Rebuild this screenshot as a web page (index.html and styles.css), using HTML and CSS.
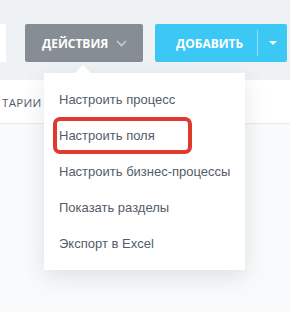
FILE: index.html
```html
<!DOCTYPE html>
<html>
<head>
<meta charset="utf-8">
<link rel="stylesheet" href="styles.css">
</head>
<body>
<div class="top">
  <div class="toolbar">
    <div class="search"></div>
    <div class="btn btn-gray">
      <span>Действия</span>
      <svg class="chev" width="11" height="7" viewBox="0 0 11 7"><path d="M1 1 L5.5 5.5 L10 1" fill="none" stroke="#c9ccd0" stroke-width="1.6"/></svg>
    </div>
    <div class="btn btn-blue">
      <span class="btn-label">Добавить</span>
      <span class="split"></span>
      <span class="caret"></span>
    </div>
  </div>
</div>
<div class="tabs">
  <span class="tab">тарии</span>
</div>
<div class="content"></div>

<div class="menu">
  <span class="menu-arrow"></span>
  <div class="item">Настроить процесс</div>
  <div class="item">Настроить поля</div>
  <div class="item">Настроить бизнес-процессы</div>
  <div class="item">Показать разделы</div>
  <div class="item">Экспорт в Excel</div>
  <span class="highlight"></span>
</div>
</body>
</html>
```
FILE: styles.css
```css
html, body {
  margin: 0;
  padding: 0;
}
body {
  width: 290px;
  height: 312px;
  background: #f9fafb;
  font-family: "Liberation Sans", Arial, sans-serif;
  overflow: hidden;
  position: relative;
}
.top {
  background: #eef2f4;
  height: 80px;
  box-sizing: border-box;
  padding-top: 24px;
}
.toolbar {
  display: flex;
  align-items: stretch;
  height: 38px;
}
.search {
  width: 6px;
  background: #fff;
  margin-right: 19px;
}
.btn {
  display: flex;
  align-items: center;
  box-sizing: border-box;
  border-radius: 2px;
  color: #fff;
  font-family: "Open Sans", sans-serif;
  font-weight: 700;
  font-size: 12px;
  text-transform: uppercase;
}
.btn-gray {
  width: 118px;
  background: #868d95;
  padding-left: 17px;
}
.chev {
  margin-left: 8px;
}
.btn-blue {
  width: 132px;
  margin-left: 12px;
  background: #3bc8f5;
  padding-left: 21px;
}
.split {
  width: 1px;
  height: 26px;
  background: rgba(255,255,255,0.45);
  margin-left: 14px;
}
.caret {
  width: 0;
  height: 0;
  border-left: 4px solid transparent;
  border-right: 4px solid transparent;
  border-top: 4px solid #fff;
  margin-left: 11px;
}
.tabs {
  height: 43px;
  background: #fff;
  border-bottom: 1px solid #e8eaec;
  display: flex;
  align-items: center;
}
.tab {
  margin-left: 2px;
  margin-top: 2px;
  font-family: "Open Sans", sans-serif;
  font-size: 11.5px;
  color: #535c69;
  text-transform: uppercase;
  letter-spacing: 0.3px;
}
.menu {
  position: absolute;
  left: 44px;
  top: 73px;
  width: 201px;
  box-sizing: border-box;
  padding: 9px 0 8px;
  background: #fff;
  box-shadow: 0 7px 21px rgba(83, 92, 105, 0.16);
}
.menu-arrow {
  position: absolute;
  left: 31px;
  top: -8px;
  width: 0;
  height: 0;
  border-left: 8px solid transparent;
  border-right: 8px solid transparent;
  border-bottom: 8px solid #fff;
}
.item {
  height: 36px;
  line-height: 36px;
  padding-left: 15px;
  font-size: 13px;
  color: #535c69;
  white-space: nowrap;
}
.highlight {
  position: absolute;
  left: 9px;
  top: 44px;
  width: 139px;
  height: 37px;
  box-sizing: border-box;
  border: 4px solid #de3a30;
  border-radius: 7px;
}
```
